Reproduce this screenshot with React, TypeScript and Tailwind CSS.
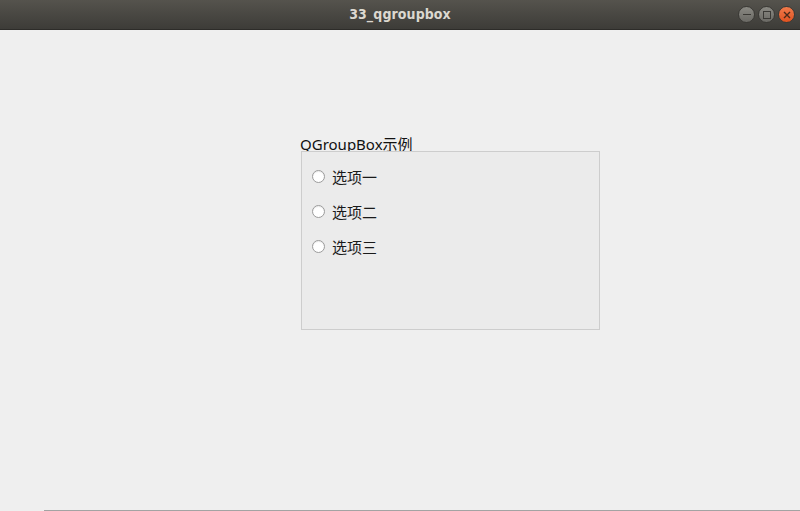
import React from "react";

const options = ["选项一", "选项二", "选项三"];

const font = { fontFamily: '"Noto Sans", "Noto Sans CJK SC", sans-serif' };

const TitleBar = () => (
  <div className="relative h-[30px] flex items-center justify-center bg-gradient-to-b from-[#55534d] to-[#3d3c38] border-b border-[#2d2c29]">
    <span className="text-[14px] font-bold text-[#dcd8d0] tracking-[0.1px]" style={{ fontFamily: '"DejaVu Sans Condensed", "DejaVu Sans", sans-serif' }}>
      33_qgroupbox
    </span>
    <div className="absolute right-[5px] top-[6px] flex gap-[3px]">
      <div className="w-[17px] h-[17px] rounded-full bg-gradient-to-b from-[#8a8983] to-[#6a6964] border border-[#3a3935] flex items-center justify-center">
        <div className="w-[8px] h-[1.5px] bg-[#3a3935]" />
      </div>
      <div className="w-[17px] h-[17px] rounded-full bg-gradient-to-b from-[#8a8983] to-[#6a6964] border border-[#3a3935] flex items-center justify-center">
        <div className="w-[8px] h-[8px] border-[1.5px] border-[#3a3935]" />
      </div>
      <div className="w-[17px] h-[17px] rounded-full bg-gradient-to-b from-[#f07a4a] to-[#e0521f] border border-[#3a3935] flex items-center justify-center">
        <svg width="8" height="8" viewBox="0 0 8 8">
          <path d="M1 1 L7 7 M7 1 L1 7" stroke="#4a2a1a" strokeWidth="1.4" />
        </svg>
      </div>
    </div>
  </div>
);

const Radio = ({ label }: { label: string }) => (
  <div className="h-[35px] flex items-center gap-[7px]">
    <div className="w-[13px] h-[13px] rounded-full bg-white border border-[#9b9b9b] shadow-[inset_0_1px_1px_rgba(0,0,0,0.08)]" />
    <span className="text-[15px] text-[#1a1a1a] leading-none pt-[2px]">{label}</span>
  </div>
);

export default function App() {
  return (
    <div className="w-[800px] h-[511px] flex flex-col bg-[#efefef] overflow-hidden" style={font}>
      <TitleBar />
      <div className="flex-1 flex flex-col pt-[105px] pl-[300px]">
        <div className="h-[16px] text-[15px] leading-[18px] text-[#111]">QGroupBox示例</div>
        <div className="ml-[1px] w-[299px] h-[179px] border border-[#cdcdcd] bg-[#ebebeb] pt-[7px] pl-[10px] flex flex-col">
          {options.map((o) => (
            <Radio key={o} label={o} />
          ))}
        </div>
      </div>
      <div className="h-[1px] bg-[#a3a3a3] ml-[44px]" />
    </div>
  );
}
